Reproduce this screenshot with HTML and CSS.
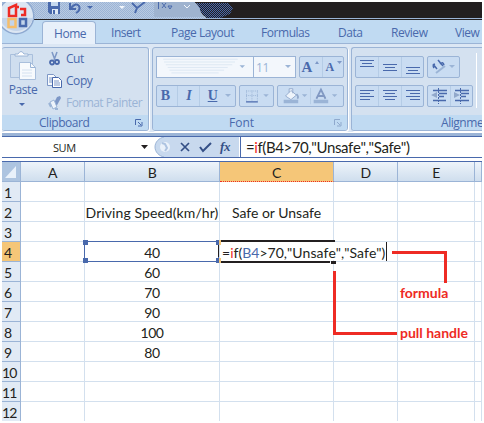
FILE: index.html
```html
<!DOCTYPE html>
<html lang="en">
<head>
<meta charset="utf-8">
<title>Spreadsheet</title>
<link rel="stylesheet" href="styles.css">
</head>
<body>
<main class="app">
  <header class="titlebar">
    <svg class="quick" width="243" height="17" viewBox="2 2 243 17">
      <defs>
        <pattern id="weave" width="2" height="2" patternUnits="userSpaceOnUse"><path d="M0 0h1v1H0zM1 1h1v1H1z" fill="#9bb4d6"/></pattern>
        <pattern id="dots" width="2" height="2" patternUnits="userSpaceOnUse"><path d="M0 0h1v1H0zM1 1h1v1H1z" fill="#4969ac"/></pattern>
      </defs>
      <path d="M2 2h192q5 3 6 8t8 9H2z" fill="#b9cae2"/>
      <path d="M2 2h192q5 3 6 8t8 9H2z" fill="url(#weave)"/>
      <path d="M154 2h40q6 4 6 8t6 7H154z" fill="#9fb3cf"/>
      <path d="M196 3h32l5 5-3 6-10 4h-12q-8-5-8-9z" fill="url(#dots)"/>
      <path d="M49 2h11v12H50l-2-2V2z" fill="#4969ac"/><path d="M51 2h7v4h-7z" fill="#c5d8ee"/><path d="M52 9h6v5h-6z" fill="#dfe9f5"/><path d="M53 10h2v4h-2z" fill="#4969ac"/>
      <path d="M70 3v6h6M71 8q5-6 8-2 2 4-3 7" fill="none" stroke="#4969ac" stroke-width="2"/>
      <path d="M87 6h6l-3 3z" fill="#4969ac"/><path d="M119 6h6l-3 3z" fill="#f2f6fb"/>
      <path d="M132 3l5 5 8-6M137 8l-2 5" fill="none" stroke="#4969ac" stroke-width="2"/>
      <path d="M158.500 2v7M162 3l4 5M166 3l-4 5M168 6h4l-2 3z" fill="none" stroke="#4969ac"/>
      <path d="M184 5l3 3 3-3" fill="none" stroke="#f2f6fb"/>
    </svg>
  </header>
  <svg class="orb" width="38" height="36" viewBox="0 0 38 36">
    <circle cx="14" cy="14" r="18.500" fill="#8ea9d0"/><circle cx="14" cy="14" r="17" fill="#dce6f2"/><path d="M-2 16h33a17 17 0 0 1-33 0" fill="#c3d4ea"/>
    <g fill="none" stroke-width="2.500"><path d="M7 14V6l7-3v11zM14 5h3" stroke="#ee2b24"/><path d="M18 7h5v6h-4" stroke="#ee2b24"/><path d="M6.500 17h7v8h-7z" stroke="#f5bd6b"/><path d="M18 17h6v7h-6z" stroke="#4969ac"/></g>
  </svg>
  <nav class="tabs">
    <span class="tab home"><b>Home</b></span><span class="tab insert"><b>Insert</b></span><span class="tab page"><b>Page Layout</b></span><span class="tab formulas"><b>Formulas</b></span><span class="tab data"><b>Data</b></span><span class="tab review"><b>Review</b></span><span class="tab view"><b>View</b></span>
  </nav>
  <section class="ribbon">
    <div class="group clipboard">
      <div class="clip-body">
        <div class="paste">
          <svg width="28" height="30" viewBox="0 0 28 30"><path d="M.5 3.500h22v23H.5z" fill="#cfdeef" stroke="#a9bfdc"/><path d="M5 5V3h3q3-5 6 0h4v2z" fill="#fff" stroke="#9bb4d6"/><path d="M9.500 11.500h11l5 5v12h-16z" fill="#f7fafd" stroke="#a9bfdc"/><path d="M20.500 11.500v5h5" fill="none" stroke="#9bb4d6"/><path d="M12 19h10M12 22h10M12 25h10" stroke="#d4e1f0"/></svg>
          <span>Paste</span>
          <svg width="6" height="4" viewBox="0 0 6 4"><path d="M0 0h6L3 3z" fill="#4969ac"/></svg>
        </div>
        <div class="actions">
          <div><svg width="16" height="16" viewBox="0 0 16 16"><path d="M5 1l3 8M10 1L7 9" stroke="#7d97c6" stroke-width="1.500"/><circle cx="5" cy="11.500" r="2" fill="none" stroke="#4969ac" stroke-width="1.800"/><circle cx="10" cy="11" r="2" fill="none" stroke="#4969ac" stroke-width="1.800"/></svg><span class="cut">Cut</span></div>
          <div><svg width="16" height="16" viewBox="0 0 16 16"><path d="M.5 1.500h6l3 3v8h-9z" fill="#f7fafd" stroke="#7d97c6"/><path d="M2 5h5M2 7h5M2 9h5" stroke="#7d97c6"/><path d="M5.500 4.500h6l3 3v7h-9z" fill="#fff" stroke="#4969ac"/><path d="M7 8h5M7 10h6M7 12h6" stroke="#7d97c6"/></svg><span class="copy">Copy</span></div>
          <div><svg width="16" height="16" viewBox="0 0 16 16"><path d="M10 2l3-1 1 2-5 9-3-2z" fill="#7d97c6"/><path d="M3 7l4-2 3 7-4 2z" fill="#eef4fb" stroke="#9bb4d6"/><path d="M2 8l2 4M8 14l3 0" stroke="#9bb4d6" stroke-width="2"/></svg><span class="painter">Format Painter</span></div>
        </div>
      </div>
      <footer><span class="clip-title">Clipboard</span><svg class="launch" width="8" height="8" viewBox="0 0 8 8"><path d="M.5 6V.5H6M3 3l3 3M7 3v4H3" fill="none" stroke="#4969ac"/></svg></footer>
    </div>
    <div class="group font">
      <div class="tools">
        <div class="line">
          <svg class="box field" width="98" height="22" viewBox="0 0 98 22"><path d="M3 2.500h82M4 5.500h78M6 8.500h73M8 11.500h66M10 14.500h60M12 17.500h52" stroke="#dce7f3"/><path d="M87 9h6l-3 3z" fill="#9bb4d6"/></svg>
          <div class="box field size"><span>11</span><svg width="6" height="4"><path d="M0 0h6L3 3z" fill="#9bb4d6"/></svg></div>
          <div class="box grow"><span class="big">A</span><svg width="4" height="14"><path d="M0 4l2-3 2 3z" fill="#7d97c6"/></svg><i></i><span class="small">A</span><svg width="5" height="14"><path d="M0 1h5L2.500 4z" fill="#7d97c6"/></svg></div>
        </div>
        <div class="line">
          <div class="box biu"><b>B</b><i></i><em>I</em><i></i><u>U</u><svg width="6" height="4"><path d="M0 0h6L3 3z" fill="#9bb4d6"/></svg></div>
          <svg class="box" width="35" height="22" viewBox="0 0 35 22"><path d="M6 5.500h13M6 10.500h13M6.500 5v11M12.500 5v11M18.500 5v11" stroke="#9bb4d6" stroke-dasharray="1 1"/><path d="M6 17.500h13" stroke="#4969ac" stroke-width="1.300"/><path d="M25 9h6l-3 3z" fill="#9bb4d6"/></svg>
          <svg class="box" width="67" height="22" viewBox="0 0 67 22"><path d="M6 11l6-6 6 5-6 5zM10 7V3h4v5" fill="#eef4fb" stroke="#91a8cb"/><path d="M18 9q3 3 1 5" stroke="#91a8cb" stroke-width="2" fill="none"/><path d="M4 15h16v4H4zM37 15h16v4H37z" fill="#9bb4d6"/><path d="M24 9h6l-3 3zM57 9h6l-3 3z" fill="#9bb4d6"/><path d="M33.500 2v18" stroke="#b5cce6"/><path d="M40 14l5-10 5 10M42 11h6" fill="none" stroke="#8199c3" stroke-width="2"/></svg>
        </div>
      </div>
      <footer><span class="font-title">Font</span><svg class="launch" width="8" height="8" viewBox="0 0 8 8"><path d="M.5 6V.5H6M3 3l3 3M7 3v4H3" fill="none" stroke="#8fa9cd"/></svg></footer>
    </div>
    <div class="group align">
      <div class="tools align-tools">
        <div>
        <div class="line">
          <svg class="box" width="69" height="22" viewBox="1 1 67 20"><path d="M23.500 1v20M46.500 1v20" stroke="#b5cce6"/><path d="M5 4.500h14M7 7.500h10M5 10.500h14M28 8.500h14M30 11.500h10M28 14.500h14M51 11.500h14M53 14.500h10M51 17.500h14" stroke="#4969ac"/></svg>
          <svg class="box" width="33" height="22" viewBox="1 1 31 20"><path d="M6 8l4 5M7 12q-2-3 1-4M11 4l5 6M13 8q3-3 4 1" stroke="#4969ac" stroke-width="1.500" fill="none"/><path d="M9 17l9-7" stroke="#9bb4d6" stroke-width="2"/><path d="M22 9h6l-3 3z" fill="#9bb4d6"/></svg>
        </div>
        <div class="line">
          <svg class="box" width="69" height="22" viewBox="1 1 67 20"><path d="M23.500 1v20M46.500 1v20" stroke="#b5cce6"/><path d="M5 5.500h14M5 8.500h10M5 11.500h14M5 14.500h10M28 5.500h14M30 8.500h10M28 11.500h14M30 14.500h10M51 5.500h14M55 8.500h10M51 11.500h14M55 14.500h10" stroke="#4969ac"/></svg>
          <svg class="box" width="46" height="22" viewBox="1 1 44 20"><path d="M23.500 1v20" stroke="#b5cce6"/><path d="M6 5.500h14M12 8.500h8M12 11.500h5M6 15.500h13M28 5.500h14M34 8.500h8M34 11.500h5M28 15.500h14" stroke="#4969ac" stroke-width="1.300"/><path d="M11.500 3v16M33.500 3v16" stroke="#4969ac" stroke-dasharray="2 1"/><path d="M10 7v6L4 10zM27 7v6l6-3z" fill="#91a8cb"/></svg>
        </div>
        </div>
        <div class="rule"></div>
      </div>
      <footer><span class="align-title">Alignment</span></footer>
    </div>
  </section>
  <section class="formula-bar">
    <div class="name"><span class="sum">SUM</span><svg width="7" height="4"><path d="M0 0h7L3.500 4z" fill="#231f20"/></svg></div>
    <svg class="buttons" width="85" height="20" viewBox="154 137 85 20"><path d="M239 137v20h-75c-5-1-9-5-9-10s4-9 9-10z" fill="#c8d9ee"/><path d="M164 137c-5 1-9 5-9 10s4 9 9 10" fill="none" stroke="#9bb4d6"/><circle cx="165" cy="147" r="5" fill="#eaf1fa"/><path d="M162 143l3 1 2 4-2 3" fill="none" stroke="#adc3e1" stroke-width="2"/><path d="M181 143l8 8M189 143l-8 8" stroke="#344f86" stroke-width="1.700"/><path d="M200 147l3 4 8-8" fill="none" stroke="#344f86" stroke-width="2"/><text x="220" y="151" class="fx">fx</text></svg>
    <div class="entry"><span class="entered">=<em>i</em>f(B4&gt;70,"Unsafe","Safe")</span></div>
  </section>
  <section class="sheet">
    <div class="corner"><svg width="18" height="19"><path d="M14 4v12H3z" fill="#e9f1fa"/></svg></div><div class="col">A</div><div class="col">B</div><div class="col active">C</div><div class="col">D</div><div class="col">E</div><div class="col"></div>
    <div class="row">1</div><p></p><p></p><p></p><p></p><p></p><p></p>
    <div class="row">2</div><p></p><p><span class="speed">Driving Speed(km/hr)</span></p><p><span class="safe">Safe or Unsafe</span></p><p></p><p></p><p></p>
    <div class="row">3</div><p></p><p></p><p></p><p></p><p></p><p></p>
    <div class="row active">4</div><p></p><p>40</p><p class="editing"><span class="edit">=<em>i</em>f(<strong>B4</strong>&gt;70,"Unsafe","Safe")</span></p><p></p><p></p><p></p>
    <div class="row">5</div><p></p><p>60</p><p></p><p></p><p></p><p></p>
    <div class="row">6</div><p></p><p>70</p><p></p><p></p><p></p><p></p>
    <div class="row">7</div><p></p><p>90</p><p></p><p></p><p></p><p></p>
    <div class="row">8</div><p></p><p>100</p><p></p><p></p><p></p><p></p>
    <div class="row">9</div><p></p><p>80</p><p></p><p></p><p></p><p></p>
    <div class="row">10</div><p></p><p></p><p></p><p></p><p></p><p></p>
    <div class="row">11</div><p></p><p></p><p></p><p></p><p></p><p></p>
    <div class="row">12</div><p></p><p></p><p></p><p></p><p></p><p></p>
  </section>
  <svg class="overlay" width="484" height="423" viewBox="0 0 484 423">
    <path d="M84.500 241.500h134v20h-134z" fill="none" stroke="#4969ac"/><path d="M83 240h5v5h-5zM83 258h5v5h-5zM216 240h3v5h-3zM216 258h3v5h-3z" fill="#4969ac"/>
    <path d="M219 240h2v5h-2zM219 258h2v5h-2z" fill="#f5c678"/><path d="M218 245h1v12h-1zM221 240h114v2H221zM221 261h109v2H221zM331 261h5v3h-5zM386 242h1v19h-1z" fill="#231f20"/>
    <path d="M392 252.500h53.500V283M334.500 271v62.500H397" fill="none" stroke="#ee2b24" stroke-width="3"/>
  </svg>
  <strong class="note formula">formula</strong><strong class="note handle">pull handle</strong>
</main>
</body>
</html>
```
FILE: styles.css
```css
* { box-sizing: border-box; }
body { margin: 0; background: #fff; overflow: hidden; }
svg { display: block; flex: none; }
p { margin: 0; }
.app { position: relative; width: 484px; height: 423px; padding: 2px; display: flex; flex-direction: column; overflow: hidden; font: 12px "Open Sans", sans-serif; letter-spacing: -.45px; color: #4969ac; }
.titlebar { height: 18px; flex: none; background: #231f20; border-bottom: 1px solid #231f20; box-shadow: inset 0 -1px #9bb4d6; }
.orb { position: absolute; left: 2px; top: 2px; z-index: 2; }
.tabs { height: 24px; flex: none; display: flex; background: #c0daf2; border-bottom: 1px solid #9bb4d6; padding-left: 40px; }
.tab { height: 24px; line-height: 26px; white-space: nowrap; }
.tab b { font-weight: 400; }
.home { width: 54px; margin-right: 15px; margin-top: 1px; line-height: 23px; padding-left: 12px; background: #e8f0fa; border: 1px solid #9bb4d6; border-bottom: 0; border-radius: 4px 4px 0 0; }
.home b { margin-left: -1px; }
.insert { width: 60px; } .page { width: 90px; } .formulas { width: 77px; } .data { width: 53px; } .review { width: 64px; }
.ribbon { height: 92px; flex: none; display: flex; gap: 3px; background: #dce7f4; padding-top: 3px; border-bottom: 3px solid #9bb4d6; box-shadow: inset 0 -1px #fff; }
.group { height: 84px; flex: none; display: flex; flex-direction: column; justify-content: space-between; background: #d4e1f0; border: 1px solid #9bb4d6; border-radius: 3px; box-shadow: 1px 1px #fff; overflow: hidden; }
.clipboard { width: 147px; border-left: 0; } .font { width: 196px; } .align { width: 131px; border-right: 0; border-radius: 3px 0 0 3px; }
.group footer { height: 15px; background: #c0daf2; display: flex; justify-content: space-between; line-height: 15px; padding-right: 5px; }
.launch { margin-top: 4px; }
.clip-title { margin-left: 37px; } .font-title { margin-left: 76px; letter-spacing: 0; } .align-title { margin-left: 89px; }
.clip-body { display: flex; height: 67px; }
.paste { width: 40px; display: flex; flex-direction: column; align-items: center; padding-top: 3px; }
.paste svg:first-child { margin-left: 3px; }
.paste span { line-height: 18px; margin: 0 -2px 4px 0; }
.actions { display: flex; flex-direction: column; gap: 6px; padding: 3px 0 0 5px; white-space: nowrap; }
.actions div { display: flex; gap: 3px; line-height: 16px; height: 16px; }
.painter { color: #9bb4d6; letter-spacing: -.55px; }
.tools { padding: 8px 0 0 3px; display: flex; flex-direction: column; gap: 7px; }
.line { display: flex; gap: 3px; }
.box { height: 22px; background: #c9dcf2; border: 1px solid #9bb4d6; border-radius: 2px; }
.field { background: #f3f7fc; border-radius: 0; }
.font .line:first-child { gap: 0; }
.size { width: 43px; margin-right: 3px; margin-left: -1px; display: flex; align-items: center; justify-content: space-between; padding: 0 4px 0 2px; color: #9bb4d6; }
.grow { width: 45px; display: flex; align-items: center; justify-content: space-around; font-family: "Liberation Serif", serif; font-weight: 700; }
.big { font-size: 15px; } .small { font-size: 12px; }
.box i { width: 1px; height: 20px; background: #b5cce6; }
.biu { width: 80px; display: flex; align-items: center; justify-content: space-around; font: 700 14px/20px "Liberation Serif", serif; }
.align-tools { flex-direction: row; justify-content: flex-start; gap: 3px; }
.align-tools .line + .line { margin-top: 7px; }
.rule { width: 1px; height: 55px; margin-top: -3px; background: #fff; }
.formula-bar { height: 22px; flex: none; display: flex; border-top: 1px solid #4969ac; border-bottom: 1px solid #4969ac; color: #231f20; }
.name { width: 152px; display: flex; align-items: center; justify-content: space-between; padding: 0 6px 0 51px; font-size: 11px; }
.fx { font: italic 700 13px "Liberation Serif", serif; fill: #344f86; }
.entry { flex: 1; border-left: 1px solid #4969ac; padding-left: 5px; margin-left: 1px; font: 15px/20px Lato, sans-serif; font-kerning: none; letter-spacing: -.42px; }
.sheet { flex: 1; margin-top: 3px; border-top: 1px solid #4969ac; display: grid; grid-template-columns: 19px 64px 135px 114px 64px 77px 1fr; grid-template-rows: 20px repeat(12, 20px); overflow: hidden; font: 14px/21px Lato, sans-serif; letter-spacing: -.4px; color: #231f20; text-align: center; }
.sheet p, .sheet div { border-right: 1px solid #d3e0ee; border-bottom: 1px solid #d3e0ee; white-space: nowrap; min-width: 0; }
.sheet .col { background: linear-gradient(#eef4fa, #cfdeee); border-color: #9bb4d6; }
.sheet .corner { background: #adc4e0; border-color: #9bb4d6; }
.sheet .row { background: #e1eaf5; border-color: #9bb4d6; text-align: left; display: flex; padding-left: 2px; }
.sheet .row:nth-last-child(-n+21) { padding-left: 0; letter-spacing: -.8px; }
.sheet .active { background: #f5c678; }
.sheet .col.active { border-bottom: 1px dotted #ee2b24; }
.sheet .editing { text-align: left; padding-left: 2px; position: relative; z-index: 1; }
.speed { letter-spacing: .08px; } .safe { letter-spacing: 0; }
.edit { display: inline-block; background: #fff; height: 18px; font-kerning: none; letter-spacing: .02px; }
.edit em, .entered em { font-style: normal; color: #ee2b24; }
.edit strong { color: #4969ac; font-weight: 400; }
.overlay { position: absolute; left: 0; top: 0; z-index: 3; pointer-events: none; }
.note { position: absolute; z-index: 4; left: 400px; color: #ee2b24; font: 700 14px/18px Lato, sans-serif; letter-spacing: 0; }
.formula { top: 284px; } .handle { top: 324px; }
```
